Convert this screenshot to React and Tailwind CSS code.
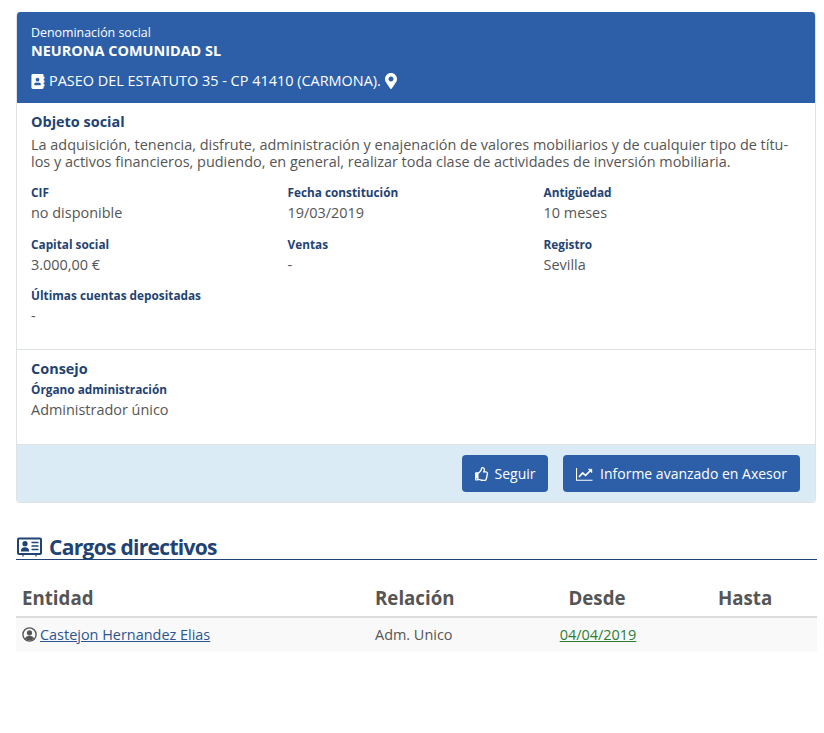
// Company detail card with directors table
import { FaAddressBook, FaMapMarkerAlt, FaRegThumbsUp } from "react-icons/fa";

const fields = [
    { label: "CIF", value: "no disponible" },
    { label: "Fecha constitución", value: "19/03/2019" },
    { label: "Antigüedad", value: "10 meses" },
    { label: "Capital social", value: "3.000,00 €" },
    { label: "Ventas", value: "-" },
    { label: "Registro", value: "Sevilla" },
    { label: "Últimas cuentas depositadas", value: "-" },
];

function Field({ label, value }) {
    return (
        <div className="h-[51.5px]">
            <div className="text-[11.8px] leading-[16px] font-bold text-[#1f4373] whitespace-nowrap">{label}</div>
            <div className="text-[14.45px] leading-[20px] mt-[3px] text-[#555]">{value}</div>
        </div>
    );
}

function IdCardIcon() {
    return (
        <svg viewBox="0 0 25 20" className="w-[25px] h-[20px] ml-[1px] mr-[7px]" fill="none" stroke="currentColor">
            <rect x="1" y="1.5" width="23" height="15.5" rx="1" strokeWidth="2" />
            <circle cx="8" cy="6.7" r="2.6" fill="currentColor" stroke="none" />
            <path d="M3.8 14.5c0-3 1.7-4.3 4.2-4.3s4.2 1.3 4.2 4.3z" fill="currentColor" stroke="none" />
            <path d="M14.5 5.5h7M14.5 9h7M14.5 12.5h7" strokeWidth="1.3" />
            <path d="M6 17v2.5M19 17v2.5" strokeWidth="1.2" />
        </svg>
    );
}

function ChartIcon() {
    return (
        <svg viewBox="0 0 17 14" className="w-[17px] h-[14px]" fill="none" stroke="currentColor">
            <path d="M0.5 1v12.2h16" strokeWidth="1.1" />
            <path d="M3 10l3.6-4 3 2.4L15 3" strokeWidth="1.7" />
            <path d="M12 2.2h3.8V6" fill="currentColor" strokeWidth="0.6" />
        </svg>
    );
}

function PersonIcon() {
    return (
        <svg viewBox="0 0 15 15" className="w-[15px] h-[15px] text-[#555] shrink-0" fill="none" stroke="currentColor">
            <circle cx="7.5" cy="7.5" r="6.6" strokeWidth="1.4" />
            <circle cx="7.5" cy="5.8" r="2.6" fill="currentColor" stroke="none" />
            <path d="M3 11.6c.7-2 2.4-2.8 4.5-2.8s3.8.8 4.5 2.8c-1.2 1.2-2.8 1.9-4.5 1.9s-3.3-.7-4.5-1.9z" fill="currentColor" stroke="none" />
        </svg>
    );
}

export default function App() {
    return (
        <div className="bg-white min-h-[733px] pt-[12px] pl-[16px] pr-[7px] font-['Open_Sans',sans-serif] text-[#555]">
            <div className="w-[800px] rounded-[4px] border border-t-0 border-[#dfe3e6] overflow-hidden">
                <div className="-mx-px bg-[#2c5fa8] text-white pl-[15px] pt-[13px] h-[91px]">
                    <div className="text-[12.4px] leading-[16px]">Denominación social</div>
                    <div className="text-[14.45px] leading-[20px] font-bold">NEURONA COMUNIDAD SL</div>
                    <div className="flex items-center mt-[10px] text-[14.45px] leading-[20px]">
                        <FaAddressBook className="w-[14px] h-[15px] mr-[4px]" />
                        <span>PASEO DEL ESTATUTO 35 - CP 41410 (CARMONA).</span>
                        <FaMapMarkerAlt className="w-[12px] h-[16px] ml-[4px]" />
                    </div>
                </div>

                <div className="pl-[14px] pr-[12px] pt-[9px] h-[247px] border-b border-[#dfe3e6]">
                    <h3 className="text-[14.45px] leading-[20px] font-bold text-[#1f4373]">Objeto social</h3>
                    <p className="text-[14.45px] leading-[17px] mt-[4px] text-[#555]">
                        La adquisición, tenencia, disfrute, administración y enajenación de valores mobiliarios y de cualquier tipo de títu-<br />
                        los y activos financieros, pudiendo, en general, realizar toda clase de actividades de inversión mobiliaria.
                    </p>
                    <div className="grid grid-cols-[256.5px_256px_1fr] mt-[14px]">
                        {fields.map(f => <Field key={f.label} {...f} />)}
                    </div>
                </div>

                <div className="pl-[14px] pt-[9px] h-[95px] border-b border-[#dfe3e6]">
                    <h3 className="text-[14.45px] leading-[20px] font-bold text-[#1f4373]">Consejo</h3>
                    <div className="text-[11.8px] leading-[16px] font-bold text-[#1f4373] mt-[2px]">Órgano administración</div>
                    <div className="text-[14.45px] leading-[20px] mt-[3px] text-[#555]">Administrador único</div>
                </div>

                <div className="bg-[#daebf5] h-[57px] flex items-center justify-end gap-[15px] pr-[15px]">
                    <button className="h-[37px] w-[86px] rounded-[4px] bg-[#2c5fa8] text-white text-[14px] flex items-center justify-center gap-[6px]">
                        <FaRegThumbsUp className="w-[14px] h-[14px]" />
                        Seguir
                    </button>
                    <button className="h-[37px] w-[237px] rounded-[4px] bg-[#2c5fa8] text-white text-[14px] flex items-center justify-center gap-[7px] whitespace-nowrap">
                        <ChartIcon />
                        Informe avanzado en Axesor
                    </button>
                </div>
            </div>

            <div className="w-[801px] mt-[31px] h-[26px] border-b border-[#1f4373] flex items-center text-[#1f4373]">
                <IdCardIcon />
                <h2 className="text-[21px] font-bold tracking-[-0.7px] leading-[26px]">Cargos directivos</h2>
            </div>

            <table className="w-[801px] mt-[20px] table-fixed border-collapse">
                <thead>
                    <tr className="h-[37px] border-b-2 border-[#dddddd] text-[18.7px] font-bold text-[#555]">
                        <th className="w-[353px] text-left pl-[6px] font-bold">Entidad</th>
                        <th className="w-[164px] text-left pl-[6px] font-bold">Relación</th>
                        <th className="w-[128px] text-center font-bold">Desde</th>
                        <th className="text-left pl-[57px] font-bold">Hasta</th>
                    </tr>
                </thead>
                <tbody>
                    <tr className="h-[35px] bg-[#f9f9f9] text-[14.45px]">
                        <td className="pl-[6px]">
                            <span className="flex items-center gap-[3px]">
                                <PersonIcon />
                                <a href="#" className="underline text-[#2a5590]">Castejon Hernandez Elias</a>
                            </span>
                        </td>
                        <td className="pl-[6px]">Adm. Unico</td>
                        <td className="text-center pl-[2px]"><a href="#" className="underline text-[#2e7d32]">04/04/2019</a></td>
                        <td></td>
                    </tr>
                </tbody>
            </table>
        </div>
    );
}
